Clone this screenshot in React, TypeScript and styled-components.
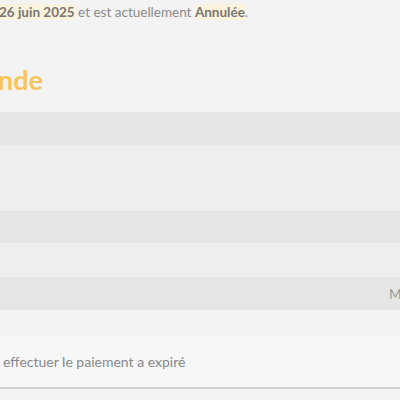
import styled, { createGlobalStyle } from "styled-components";

const Global = createGlobalStyle`
  body {
    margin: 0;
    background: #f3f3f3;
    font-family: Lato, "Open Sans", "Liberation Sans", sans-serif;
    overflow: hidden;
  }
`;

const Page = styled.div`
  width: 400px;
  height: 400px;
  overflow: hidden;
`;

const Intro = styled.p`
  margin: 0 0 0 -1px;
  padding-top: 2px;
  font-size: 13.5px;
  line-height: 20px;
  color: #8a8a8a;
  white-space: nowrap;
`;

const Mark = styled.mark`
  background: #fcf3dd;
  color: #777;
  font-weight: 700;
`;

const Title = styled.h2`
  margin: 38px 0 0 -2px;
  height: 40px;
  font-size: 27px;
  line-height: 40px;
  font-weight: 700;
  color: #f7c55e;
  white-space: nowrap;
`;

const Table = styled.div`
  margin-top: 12px;
  display: flex;
  flex-direction: column;
`;

const Row = styled.div<{ $h: number; $dark?: boolean }>`
  height: ${(p) => p.$h}px;
  background: ${(p) => (p.$dark ? "#e5e5e5" : "#eeeeee")};
  display: grid;
  grid-template-columns: 389px 1fr;
  align-items: center;
  font-size: 13.5px;
  color: #9a9a9a;
  white-space: nowrap;
`;

const Cell = styled.span`
  overflow: visible;
`;

const Note = styled.div`
  margin-top: 25px;
  height: 54px;
  background: #f7f7f7;
  border-bottom: 2px solid #d2d2d2;
  display: flex;
  align-items: center;
  padding: 0 0 0 3px;
  box-sizing: border-box;
  font-size: 14px;
  color: #888;
  white-space: nowrap;
`;

export default function App() {
  return (
    <Page>
      <Global />
      <Intro>
        <Mark>26 juin 2025</Mark> et est actuellement <Mark>Annulée</Mark>.
      </Intro>
      <Title>nde</Title>
      <Table>
        <Row $h={33} $dark />
        <Row $h={66} />
        <Row $h={32} $dark />
        <Row $h={34} />
        <Row $h={33} $dark>
          <Cell />
          <Cell>Moyen de paiement :</Cell>
        </Row>
      </Table>
      <Note>effectuer le paiement a expiré</Note>
    </Page>
  );
}
